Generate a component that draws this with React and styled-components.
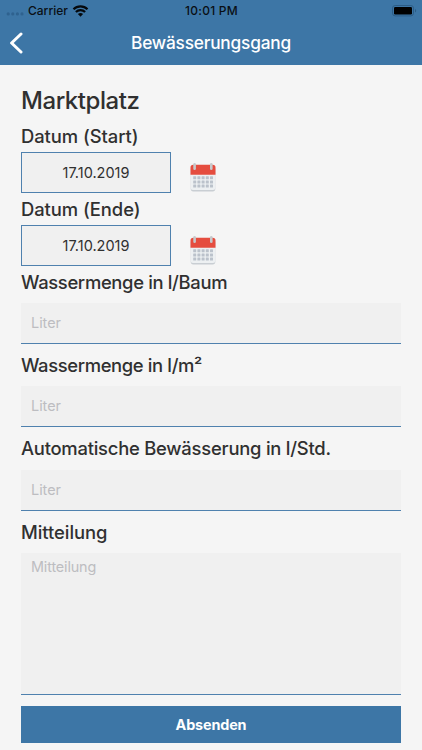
import { useReducer } from 'react'
import styled, { createGlobalStyle } from 'styled-components'

const reducer = (current, { name, value }) => ({ ...current, [name]: value })
const defaultState = () => ({ tree: '', area: '', auto: '', message: '' })

const GlobalStyle = createGlobalStyle`
  * {
    box-sizing: border-box;
  }

  body {
    margin: 0;
    background: #f5f5f5;
    color: #303030;
    font-family: Inter, 'Liberation Sans', sans-serif;
  }

  input, textarea, button {
    font-family: inherit;
  }
`

const Screen = styled.div`
  height: 750px;
  overflow: hidden;
`

const Header = styled.header`
  height: 65px;
  background: #3d76a6;
`

const StatusBar = styled.div`
  display: grid;
  grid-template-columns: 1fr auto 1fr;
  align-items: center;
  height: 21px;
  padding: 0 5px 0 6px;
  color: #0a0f14;
  font-size: 12px;
  font-weight: 500;
  line-height: 21px;
`

const StatusSide = styled.div`
  display: flex;
  align-items: center;
  justify-content: ${({ $end }) => ($end ? 'flex-end' : 'flex-start')};
  gap: 4px;
`

const Time = styled.span`
  letter-spacing: 0.25px;
`

const NavBar = styled.div`
  display: grid;
  grid-template-columns: 40px 1fr 40px;
  align-items: center;
  height: 44px;
`

const BackButton = styled.button`
  display: flex;
  padding: 0 0 0 9px;
  border: none;
  background: none;
  cursor: pointer;
`

const NavTitle = styled.h1`
  margin: 0;
  color: #ffffff;
  font-size: 17.3px;
  font-weight: 500;
  line-height: 44px;
  letter-spacing: -0.2px;
  text-align: center;
`

const Form = styled.form`
  display: flex;
  flex-direction: column;
  padding: 21px 21px 0;
`

const Place = styled.h2`
  margin: 0 0 9px;
  font-size: 24px;
  font-weight: 500;
  line-height: 30px;
  letter-spacing: -0.45px;
`

const Label = styled.label`
  height: 22px;
  font-size: 18.4px;
  font-weight: 500;
  line-height: 22px;
  letter-spacing: ${({ $spacing }) => $spacing || '-0.05px'};
  white-space: nowrap;
`

const DateRow = styled.div`
  display: flex;
  align-items: flex-end;
  gap: 19px;
  height: 41px;
  margin: 5px 0;
`

const DateField = styled.div`
  width: 150px;
  height: 41px;
  border: 1px solid #4f81ae;
  background: #f0f0f0;
  font-size: 14.5px;
  line-height: 39px;
  text-align: center;
`

const Input = styled.input`
  width: 100%;
  height: 41px;
  margin: 10.2px 0 10px;
  padding: 0 10px 1px;
  border: none;
  border-bottom: 1px solid #4f81ae;
  border-radius: 0;
  background: #f0f0f0;
  font-size: 14.4px;
  outline: none;

  &::placeholder {
    color: #bdbdc1;
  }
`

const Message = styled.textarea`
  display: block;
  height: 142px;
  margin: 10px 0 11px;
  padding: 5px 10px;
  border: none;
  border-bottom: 1px solid #4f81ae;
  border-radius: 0;
  background: #f0f0f0;
  font-size: 14.4px;
  line-height: 18px;
  letter-spacing: -0.15px;
  resize: none;
  outline: none;

  &::placeholder {
    color: #bdbdc1;
  }
`

const SubmitButton = styled.button`
  height: 37px;
  padding: 0;
  border: none;
  background: #3d76a6;
  color: #ffffff;
  font-size: 14.4px;
  font-weight: 700;
  letter-spacing: -0.15px;
  cursor: pointer;
`

const SignalDots = () => (
  <svg width="18" height="12" viewBox="0 0 18 12" fill="#2f628f">
    <circle cx="2.2" cy="8.9" r="1.6" />
    <circle cx="6.8" cy="8.9" r="1.6" />
    <circle cx="11.4" cy="8.9" r="1.6" />
    <circle cx="16" cy="8.9" r="1.6" />
  </svg>
)

const WifiIcon = () => (
  <svg width="17" height="12" viewBox="0 0 17 12">
    <g fill="none" stroke="#05090d" strokeWidth="2.2">
      <path d="M1.5 4.3a9.9 9.9 0 0 1 14 0" />
      <path d="M3.9 7a6.5 6.5 0 0 1 9.2 0" />
    </g>
    <path d="M5.9 9.1a3.8 3.8 0 0 1 5.2 0L8.5 11.8z" fill="#05090d" />
  </svg>
)

const BatteryIcon = () => (
  <svg width="25" height="12" viewBox="0 0 25 12">
    <rect x="0.5" y="0.5" width="21" height="10.4" rx="2.7" fill="none" stroke="#2c5c85" />
    <rect x="2" y="2" width="18" height="7.4" rx="1.2" fill="#000000" />
    <path d="M23 4c1.6.5 1.6 2.9 0 3.4z" fill="#2c5c85" />
  </svg>
)

const BackIcon = () => (
  <svg width="14" height="22" viewBox="0 0 14 22">
    <path
      d="M12 2L2.6 11l9.4 9"
      fill="none"
      stroke="#ffffff"
      strokeWidth="3"
      strokeLinecap="round"
      strokeLinejoin="round"
    />
  </svg>
)

const CalendarIcon = () => (
  <svg width="26" height="30" viewBox="0 0 26 30">
    <rect x="0.7" y="4" width="24.6" height="24.4" rx="2.6" fill="#c9ced3" />
    <path d="M0.7 11h24.6v13.8a2.2 2.2 0 0 1-2.2 2.2H2.9a2.2 2.2 0 0 1-2.2-2.2z" fill="#edf0f2" />
    <path d="M0.5 11.7V4.5a2.8 2.8 0 0 1 2.8-2.8h19.4a2.8 2.8 0 0 1 2.8 2.8v7.2z" fill="#e54d3f" />
    <rect x="3.3" y="0" width="2.6" height="7" rx="1.3" fill="#c7c9cb" />
    <rect x="20" y="0" width="2.6" height="7" rx="1.3" fill="#c7c9cb" />
    {[13.2, 17.4, 21.6].map((y) =>
      [3.2, 7.4, 11.6, 15.8, 20].map((x) => (
        <rect key={`${x}-${y}`} x={x} y={y} width="3" height="3" rx="0.5" fill="#bbc2cb" />
      ))
    )}
  </svg>
)

const App = () => {
  const [state, dispatch] = useReducer(reducer, null, defaultState)

  const handleChange = ({ target: { name, value } }) => dispatch({ name, value })

  return (
    <Screen>
      <GlobalStyle />
      <Header>
        <StatusBar>
          <StatusSide>
            <SignalDots />
            <span>Carrier</span>
            <WifiIcon />
          </StatusSide>
          <Time>10:01 PM</Time>
          <StatusSide $end>
            <BatteryIcon />
          </StatusSide>
        </StatusBar>
        <NavBar>
          <BackButton type="button" aria-label="Zurück">
            <BackIcon />
          </BackButton>
          <NavTitle>Bewässerungsgang</NavTitle>
        </NavBar>
      </Header>
      <Form onSubmit={(e) => e.preventDefault()}>
        <Place>Marktplatz</Place>
        <Label as="span">Datum (Start)</Label>
        <DateRow>
          <DateField>17.10.2019</DateField>
          <CalendarIcon />
        </DateRow>
        <Label as="span">Datum (Ende)</Label>
        <DateRow>
          <DateField>17.10.2019</DateField>
          <CalendarIcon />
        </DateRow>
        <Label htmlFor="tree" $spacing="-0.33px">Wassermenge in l/Baum</Label>
        <Input id="tree" name="tree" value={state.tree} onChange={handleChange} placeholder="Liter" />
        <Label htmlFor="area" $spacing="-0.36px">Wassermenge in l/m²</Label>
        <Input id="area" name="area" value={state.area} onChange={handleChange} placeholder="Liter" />
        <Label htmlFor="auto" $spacing="-0.23px">Automatische Bewässerung in l/Std.</Label>
        <Input id="auto" name="auto" value={state.auto} onChange={handleChange} placeholder="Liter" />
        <Label htmlFor="message">Mitteilung</Label>
        <Message
          id="message"
          name="message"
          value={state.message}
          onChange={handleChange}
          placeholder="Mitteilung"
        />
        <SubmitButton type="submit">Absenden</SubmitButton>
      </Form>
    </Screen>
  )
}

export default App
